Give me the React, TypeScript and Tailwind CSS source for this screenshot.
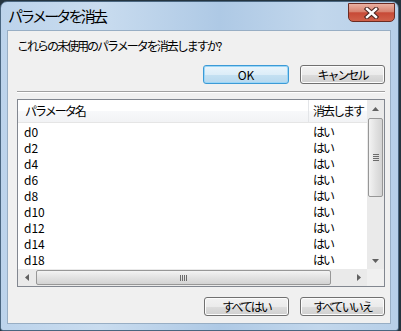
import React from 'react';

const rows = ['d0', 'd2', 'd4', 'd6', 'd8', 'd10', 'd12', 'd14', 'd18'];

const font = { fontFamily: '"Noto Sans CJK JP", "Noto Sans", sans-serif' };

function Button({ label, primary }: { label: string; primary?: boolean }) {
  return (
    <div
      className={
        'flex items-center justify-center h-[19px] rounded-[3px] border text-[12px] leading-none text-black ' +
        (primary
          ? 'w-[86px] border-[#3c9ad6] bg-[linear-gradient(#eaf5fc_0%,#dcedf8_50%,#c5e1f2_51%,#b7d8ee_100%)] shadow-[inset_0_0_0_1px_#9bd6f7]'
          : 'w-[85px] tracking-[-2px] border-[#707070] bg-[linear-gradient(#f2f2f2_0%,#ebebeb_50%,#dddddd_51%,#cfcfcf_100%)] shadow-[inset_0_0_0_1px_#fcfcfc]')
      }
    >
      {label}
    </div>
  );
}

function Arrow({ dir }: { dir: 'up' | 'down' | 'left' | 'right' }) {
  const pts = {
    up: '0,4 7,4 3.5,0',
    down: '0,0 7,0 3.5,4',
    left: '4,0 4,7 0,3.5',
    right: '0,0 0,7 4,3.5',
  }[dir];
  const vertical = dir === 'up' || dir === 'down';
  return (
    <svg width={vertical ? 7 : 4} height={vertical ? 4 : 7} viewBox={vertical ? '0 0 7 4' : '0 0 4 7'}>
      <polygon points={pts} fill="#606060" />
    </svg>
  );
}

export default function App() {
  return (
    <div className="w-[401px] h-[331px] bg-[#24343f] overflow-hidden" style={font}>
      <div className="mt-[1px] w-[399px] h-[330px] rounded-t-[7px] rounded-b-[3px] border border-[#4a6680] bg-[linear-gradient(90deg,#bcd3eb_0%,#c9dcef_25%,#aec9e5_55%,#c2d7ec_80%,#b7cfe8_100%)] flex flex-col">
        {/* Title bar */}
        <div className="h-[28px] flex items-start justify-between pl-[7px] pr-[3px]">
          <span className="mt-[4px] text-[15px] leading-[19px] text-black tracking-[-2.8px]">パラメータを消去</span>
          <div className="mt-[1px] w-[47px] h-[19px] rounded-b-[5px] border border-[#6b2b22] bg-[linear-gradient(#eab0a2_0%,#d88370_45%,#c74a37_52%,#d0614a_100%)] flex items-center justify-center">
            <svg width="15" height="12" viewBox="0 0 15 12">
              <path d="M3 2 L12 10 M12 2 L3 10" stroke="#4a2520" strokeWidth="4.5" strokeLinecap="square" />
              <path d="M3 2 L12 10 M12 2 L3 10" stroke="#ffffff" strokeWidth="2.4" strokeLinecap="square" />
            </svg>
          </div>
        </div>

        {/* Client area */}
        <div className="ml-[6px] w-[384px] h-[294px] border border-[#98aec4] bg-[#f0f0f0] flex flex-col pl-[9px] pr-[5px]">
          <div className="mt-[7px] h-[16px] text-[12px] leading-[16px] text-black tracking-[-2px]">
            これらの未使用のパラメータを消去しますか?
          </div>

          <div className="mt-[11px] flex justify-end gap-[11px]">
            <Button label="OK" primary />
            <Button label="キャンセル" />
          </div>

          <div className="mt-[7px] h-[2px] border-t border-[#a0a0a0] border-b border-b-white" />

          <div className="mt-[6px] h-[188px] border border-[#828790] bg-white flex flex-col">
            <div className="flex h-[169px]">
              <div className="flex-1 flex flex-col overflow-hidden">
                <div className="flex h-[23px] border-b border-[#e5e5e5] bg-[linear-gradient(#ffffff_0%,#ffffff_50%,#f7f8fa_51%,#f2f3f5_100%)] text-[12px] text-black tracking-[-2px]">
                  <div className="w-[291px] pl-[7px] flex items-center border-r border-[#e3e5e8]">パラメータ名</div>
                  <div className="flex-1 pl-[4px] flex items-center whitespace-nowrap overflow-hidden">消去します</div>
                </div>
                <div className="mt-[1px] flex flex-col">
                  {rows.map((r) => (
                    <div key={r} className="flex h-[16px] text-[12px] leading-[16px] text-black">
                      <div className="w-[291px] pl-[6px]">{r}</div>
                      <div className="flex-1 pl-[4px] tracking-[-2px]">はい</div>
                    </div>
                  ))}
                </div>
              </div>
              {/* Vertical scrollbar */}
              <div className="w-[17px] bg-[#eaeaea] flex flex-col items-center">
                <div className="h-[17px] flex items-center justify-center">
                  <Arrow dir="up" />
                </div>
                <div className="mt-[1px] w-[15px] h-[79px] rounded-[2px] border border-[#979797] bg-[linear-gradient(90deg,#f3f3f3,#e2e2e2_50%,#d3d3d3)] flex flex-col items-center justify-center gap-[1px]">
                  <div className="w-[6px] h-[1px] bg-[#6b6b6b]" />
                  <div className="w-[6px] h-[1px] bg-[#6b6b6b]" />
                  <div className="w-[6px] h-[1px] bg-[#6b6b6b]" />
                  <div className="w-[6px] h-[1px] bg-[#6b6b6b]" />
                </div>
                <div className="flex-1" />
                <div className="h-[17px] flex items-center justify-center">
                  <Arrow dir="down" />
                </div>
              </div>
            </div>
            {/* Horizontal scrollbar */}
            <div className="flex h-[17px] bg-[#eaeaea]">
              <div className="w-[17px] flex items-center justify-center">
                <Arrow dir="left" />
              </div>
              <div className="ml-[1px] my-[1px] w-[295px] rounded-[2px] border border-[#979797] bg-[linear-gradient(#f3f3f3,#e2e2e2_50%,#d3d3d3)] flex items-center justify-center gap-[1px]">
                <div className="w-[1px] h-[6px] bg-[#6b6b6b]" />
                <div className="w-[1px] h-[6px] bg-[#6b6b6b]" />
                <div className="w-[1px] h-[6px] bg-[#6b6b6b]" />
                <div className="w-[1px] h-[6px] bg-[#6b6b6b]" />
              </div>
              <div className="flex-1" />
              <div className="w-[17px] flex items-center justify-center">
                <Arrow dir="right" />
              </div>
              <div className="w-[17px] bg-[#f0f0f0]" />
            </div>
          </div>

          <div className="mt-[10px] flex justify-end gap-[11px]">
            <Button label="すべてはい" />
            <Button label="すべていいえ" />
          </div>
        </div>
      </div>
    </div>
  );
}
